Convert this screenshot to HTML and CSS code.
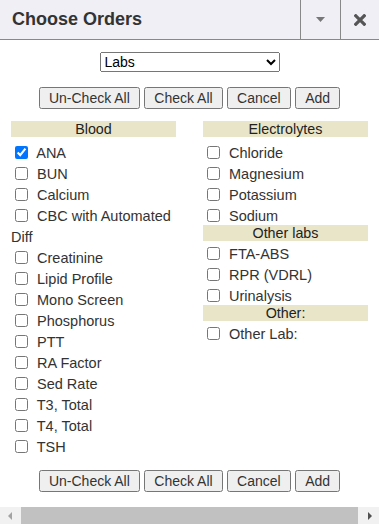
FILE: index.html
```html
<!DOCTYPE html>
<html lang="en">
<head>
  <meta charset="UTF-8" />
  <meta name="viewport" content="width=device-width, initial-scale=1.0"/>
  <title>Choose Orders</title>
  <link rel="stylesheet" href="styles.css">
</head>
<body>
  <div class="dialog">
    <div class="titlebar">
      <div class="title">Choose Orders</div>
      <button class="bar-btn" title="Collapse">
        <svg width="9" height="5" viewBox="0 0 9 5"><path d="M0 0h9L4.5 5z" fill="#777"/></svg>
      </button>
      <button class="bar-btn close" title="Close">
        <svg width="12" height="12" viewBox="0 0 12 12"><path d="M1.8 1.8l8.4 8.4M10.2 1.8l-8.4 8.4" stroke="#555" stroke-width="3.2" stroke-linecap="square"/></svg>
      </button>
    </div>

    <div class="content">
      <div class="picker">
        <select class="category">
          <option>Labs</option>
          <option>Imaging</option>
          <option>Medications</option>
        </select>
      </div>

      <div class="actions">
        <button onclick="checkAll(false)">Un-Check All</button>
        <button onclick="checkAll(true)">Check All</button>
        <button>Cancel</button>
        <button>Add</button>
      </div>

      <div class="columns">
        <div class="col">
          <div class="group">Blood</div>
          <div class="items first">
            <input type="checkbox" checked> ANA<br>
            <input type="checkbox"> BUN<br>
            <input type="checkbox"> Calcium<br>
            <input type="checkbox"> CBC with Automated Diff<br>
            <input type="checkbox"> Creatinine<br>
            <input type="checkbox"> Lipid Profile<br>
            <input type="checkbox"> Mono Screen<br>
            <input type="checkbox"> Phosphorus<br>
            <input type="checkbox"> PTT<br>
            <input type="checkbox"> RA Factor<br>
            <input type="checkbox"> Sed Rate<br>
            <input type="checkbox"> T3, Total<br>
            <input type="checkbox"> T4, Total<br>
            <input type="checkbox"> TSH
          </div>
        </div>
        <div class="col">
          <div class="group">Electrolytes</div>
          <div class="items first">
            <input type="checkbox"> Chloride<br>
            <input type="checkbox"> Magnesium<br>
            <input type="checkbox"> Potassium<br>
            <input type="checkbox"> Sodium
          </div>
          <div class="group">Other labs</div>
          <div class="items">
            <input type="checkbox"> FTA-ABS<br>
            <input type="checkbox"> RPR (VDRL)<br>
            <input type="checkbox"> Urinalysis
          </div>
          <div class="group">Other:</div>
          <div class="items">
            <input type="checkbox"> Other Lab:
          </div>
        </div>
      </div>

      <div class="actions bottom">
        <button onclick="checkAll(false)">Un-Check All</button>
        <button onclick="checkAll(true)">Check All</button>
        <button>Cancel</button>
        <button>Add</button>
      </div>
    </div>

    <div class="hscroll">
      <span class="arrow left"></span>
      <div class="thumb"></div>
      <span class="arrow right"></span>
    </div>
  </div>

  <script>
    function checkAll(state) {
      document.querySelectorAll('.items input').forEach(function (box) {
        box.checked = state;
      });
    }
  </script>
</body>
</html>
```

FILE: styles.css
```css
body {
  margin: 0;
  font-family: 'Liberation Sans', Arial, sans-serif;
  color: #333;
  background: #fff;
}

.dialog {
  width: 379px;
  height: 524px;
  display: flex;
  flex-direction: column;
  overflow: hidden;
}

.titlebar {
  display: flex;
  height: 39px;
  background: #efeff5;
  border-bottom: 1px solid #888;
}

.title {
  flex: 1;
  padding-left: 12px;
  font-size: 18px;
  font-weight: bold;
  line-height: 39px;
  color: #333;
}

.bar-btn {
  width: 40px;
  padding: 0;
  border: none;
  border-left: 1px solid #888;
  background: transparent;
  display: flex;
  align-items: center;
  justify-content: center;
}

.bar-btn.close {
  width: 39px;
}

.content {
  flex: 1;
}

.picker {
  text-align: center;
  margin-top: 12px;
}

.category {
  width: 180px;
  height: 20px;
  font-family: 'Liberation Sans', Arial, sans-serif;
  font-size: 14px;
  color: #000;
}

.actions {
  text-align: center;
  margin-top: 15px;
}

.actions button {
  font-family: 'Liberation Sans', Arial, sans-serif;
  font-size: 14px;
  color: #333;
  padding: 1px 8px;
  height: 22px;
}

.actions.bottom {
  margin-top: 14px;
}

.columns {
  display: grid;
  grid-template-columns: 1fr 1fr;
  column-gap: 27px;
  padding: 0 11px;
  margin-top: 12px;
}

.group {
  background: #e8e5c9;
  text-align: center;
  font-size: 14.3px;
  line-height: 16px;
  color: #222;
}

.items {
  font-size: 14.5px;
  line-height: 21px;
  padding-top: 3px;
  margin-bottom: -2px;
}

.items.first {
  padding-top: 6px;
}

.items input {
  margin: 0 5px 0 4px;
  vertical-align: -1px;
}

.hscroll {
  height: 17px;
  background: #f1f1f1;
  display: flex;
  align-items: stretch;
}

.thumb {
  flex: 1;
  background: #c1c1c1;
  margin: 0 8px;
}

.arrow {
  width: 13px;
  position: relative;
}

.arrow::after {
  content: "";
  position: absolute;
  top: 5px;
  border-top: 4px solid transparent;
  border-bottom: 4px solid transparent;
}

.arrow.left::after {
  left: 8px;
  border-right: 4px solid #a3a3a3;
}

.arrow.right::after {
  left: 2px;
  border-left: 4px solid #505050;
}
```
